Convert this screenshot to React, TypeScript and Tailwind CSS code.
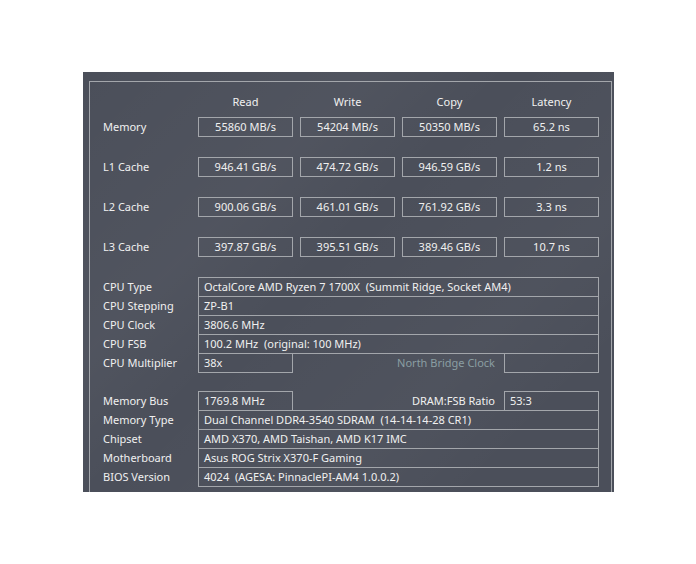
const BENCH = [
  { label: "Memory", vals: ["55860 MB/s", "54204 MB/s", "50350 MB/s", "65.2 ns"] },
  { label: "L1 Cache", vals: ["946.41 GB/s", "474.72 GB/s", "946.59 GB/s", "1.2 ns"] },
  { label: "L2 Cache", vals: ["900.06 GB/s", "461.01 GB/s", "761.92 GB/s", "3.3 ns"] },
  { label: "L3 Cache", vals: ["397.87 GB/s", "395.51 GB/s", "389.46 GB/s", "10.7 ns"] },
];

const HEADERS = ["Read", "Write", "Copy", "Latency"];

const box = "h-[20px] border border-[#a3a6ab] leading-[18px] whitespace-pre text-[#f0f0f0]";

function InfoRow({ label, value, first }: { label: string; value: string; first?: boolean }) {
  return (
    <div className={`flex ${first ? "" : "-mt-px"}`}>
      <div className="w-[95px] leading-[20px]">{label}</div>
      <div className={`${box} w-[401px] pl-[5px]`}>{value}</div>
    </div>
  );
}

function SplitRow({
  label,
  value,
  midLabel,
  midValue,
  first,
  midClass,
}: {
  label: string;
  value: string;
  midLabel: string;
  midValue: string;
  first?: boolean;
  midClass: string;
}) {
  return (
    <div className={`flex ${first ? "" : "-mt-px"}`}>
      <div className="w-[95px] leading-[20px]">{label}</div>
      <div className={`${box} w-[95px] pl-[5px]`}>{value}</div>
      <div className={`w-[211px] pr-[9px] text-right leading-[20px] ${midClass}`}>{midLabel}</div>
      <div className={`${box} w-[95px] pl-[5px]`}>{midValue}</div>
    </div>
  );
}

export default function App() {
  return (
    <div className="min-h-screen bg-white pl-[83px] pt-[72px] font-['Noto_Sans',sans-serif] text-[11px] text-[#f0f0f0]">
      <div className="h-[420px] w-[531px] overflow-hidden bg-[#4b4f5a] bg-[linear-gradient(135deg,rgba(255,255,255,0)_0%,rgba(255,255,255,0.03)_30%,rgba(255,255,255,0)_45%,rgba(255,255,255,0.025)_70%,rgba(255,255,255,0)_85%)] pl-[6px] pt-[9px]">
        <div className="h-[430px] w-[523px] border-l border-r border-t border-[#a3a6ab] pl-[13px] pt-[12px]">
          <div className="flex h-[16px] leading-[16px]">
            <div className="w-[95px]" />
            <div className="flex gap-[7px]">
              {HEADERS.map((h) => (
                <div key={h} className="w-[95px] text-center">
                  {h}
                </div>
              ))}
            </div>
          </div>

          <div className="mt-[7px] flex flex-col gap-[20px]">
            {BENCH.map((row) => (
              <div key={row.label} className="flex">
                <div className="w-[95px] leading-[20px]">{row.label}</div>
                <div className="flex gap-[7px]">
                  {row.vals.map((v, i) => (
                    <div key={i} className={`${box} w-[95px] text-center`}>
                      {v}
                    </div>
                  ))}
                </div>
              </div>
            ))}
          </div>

          <div className="mt-[20px]">
            <InfoRow first label="CPU Type" value="OctalCore AMD Ryzen 7 1700X  (Summit Ridge, Socket AM4)" />
            <InfoRow label="CPU Stepping" value="ZP-B1" />
            <InfoRow label="CPU Clock" value="3806.6 MHz" />
            <InfoRow label="CPU FSB" value="100.2 MHz  (original: 100 MHz)" />
            <SplitRow
              label="CPU Multiplier"
              value="38x"
              midLabel="North Bridge Clock"
              midValue=""
              midClass="text-[#8a9ea2]"
            />
          </div>

          <div className="mt-[18px]">
            <SplitRow
              first
              label="Memory Bus"
              value="1769.8 MHz"
              midLabel="DRAM:FSB Ratio"
              midValue="53:3"
              midClass="text-[#f0f0f0]"
            />
            <InfoRow label="Memory Type" value="Dual Channel DDR4-3540 SDRAM  (14-14-14-28 CR1)" />
            <InfoRow label="Chipset" value="AMD X370, AMD Taishan, AMD K17 IMC" />
            <InfoRow label="Motherboard" value="Asus ROG Strix X370-F Gaming" />
            <InfoRow label="BIOS Version" value="4024  (AGESA: PinnaclePI-AM4 1.0.0.2)" />
          </div>
        </div>
      </div>
    </div>
  );
}
